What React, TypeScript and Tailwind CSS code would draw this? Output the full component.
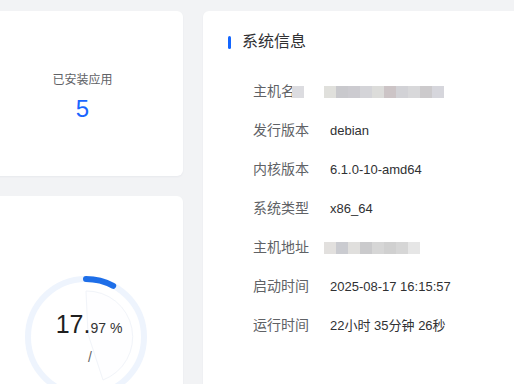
import React from 'react'

const FONT = '[font-family:"Liberation_Sans","Noto_Sans_CJK_SC",sans-serif]'

// mosaic cells that hide private values (hostname / ip)
const HOST_CELLS = ['#e0e0dc', '#c9c9cd', '#cccbd0', '#d4d4d8', '#dcdcda', '#ccc4c6', '#d2d2d6', '#d8d8da', '#cccacc', '#d6d6dc']
const ADDR_CELLS = ['#e2e0de', '#cacbd0', '#e0dfdd', '#cacacc', '#d6d6d6', '#d0d0d0', '#d6d6d6', '#e6e6e6']

function Mosaic({ cells }: { cells: string[] }) {
  return (
    <span className="flex h-[12px]">
      {cells.map((c, i) => (
        <span key={i} className="w-[12px] h-[12px]" style={{ background: c }} />
      ))}
    </span>
  )
}

function Row({ label, children }: { label: React.ReactNode; children: React.ReactNode }) {
  return (
    <div className="flex items-center h-[39px]">
      <div className="w-[77px] flex items-center text-[14px] text-[#606266]">{label}</div>
      <div className="flex items-center text-[13px] text-[#303133]">{children}</div>
    </div>
  )
}

function Gauge() {
  return (
    <div className="relative w-[128px] h-[128px]">
      <svg width="128" height="128" viewBox="0 0 128 128">
        <circle cx="64" cy="64" r="58" fill="none" stroke="#eef4fd" strokeWidth="6" />
        <path d="M64 18 A46 46 0 0 1 81 107 L66 61 Z" fill="#fefeff" stroke="#f1f4f9" strokeWidth="1" />
        <path d="M64 6 A58 58 0 0 1 91.2 12.8" fill="none" stroke="#1e6ee8" strokeWidth="6" strokeLinecap="round" />
      </svg>
      <div className="absolute inset-0 flex flex-col items-center pt-[36px] pl-[6px]">
        <div className="flex items-baseline text-[#1f1f1f]">
          <span className="text-[25px] leading-[30px]">17.</span>
          <span className="text-[14px] text-[#333]">97 %</span>
        </div>
        <div className="mt-[10px] text-[14px] leading-[16px] text-[#666] pl-[2px]">/</div>
      </div>
    </div>
  )
}

export default function App() {
  return (
    <div className={`w-[514px] h-[384px] overflow-hidden bg-[#f2f3f5] pt-[11px] flex gap-5 ${FONT}`}>
      {/* left column */}
      <div className="w-[201px] ml-[-18px] shrink-0 flex flex-col gap-5">
        <div className="h-[165px] shrink-0 bg-white rounded-md shadow-[0_1px_2px_rgba(30,50,90,0.05)] flex flex-col items-center pt-[61px]">
          <div className="text-[12px] leading-[17px] text-[#606266]">已安装应用</div>
          <div className="mt-[6px] text-[24px] leading-[28px] text-[#1a66ff]">5</div>
        </div>
        <div className="h-[300px] shrink-0 bg-white rounded-md shadow-[0_1px_2px_rgba(30,50,90,0.05)] pt-[77px] pl-[40px]">
          <Gauge />
        </div>
      </div>

      {/* system info */}
      <div className="w-[330px] shrink-0 h-[400px] bg-white rounded-md shadow-[0_1px_2px_rgba(30,50,90,0.05)] pt-[21px]">
        <div className="flex items-center h-[20px] pl-[25px]">
          <span className="w-[3px] h-[13px] rounded-sm bg-[#1366ff]" />
          <span className="ml-[11px] text-[16px] text-[#303133]">系统信息</span>
        </div>
        <div className="mt-[20px] pl-[50px]">
          <Row label={<><span>主机名</span><span className="ml-[-3px]"><Mosaic cells={['#dcdce0']} /></span></>}>
            <span className="ml-[-6px]"><Mosaic cells={HOST_CELLS} /></span>
          </Row>
          <Row label="发行版本">debian</Row>
          <Row label="内核版本">6.1.0-10-amd64</Row>
          <Row label="系统类型">x86_64</Row>
          <Row label="主机地址">
            <span className="ml-[-6px]"><Mosaic cells={ADDR_CELLS} /></span>
          </Row>
          <Row label="启动时间">2025-08-17 16:15:57</Row>
          <Row label="运行时间">22小时 35分钟 26秒</Row>
        </div>
      </div>
    </div>
  )
}
